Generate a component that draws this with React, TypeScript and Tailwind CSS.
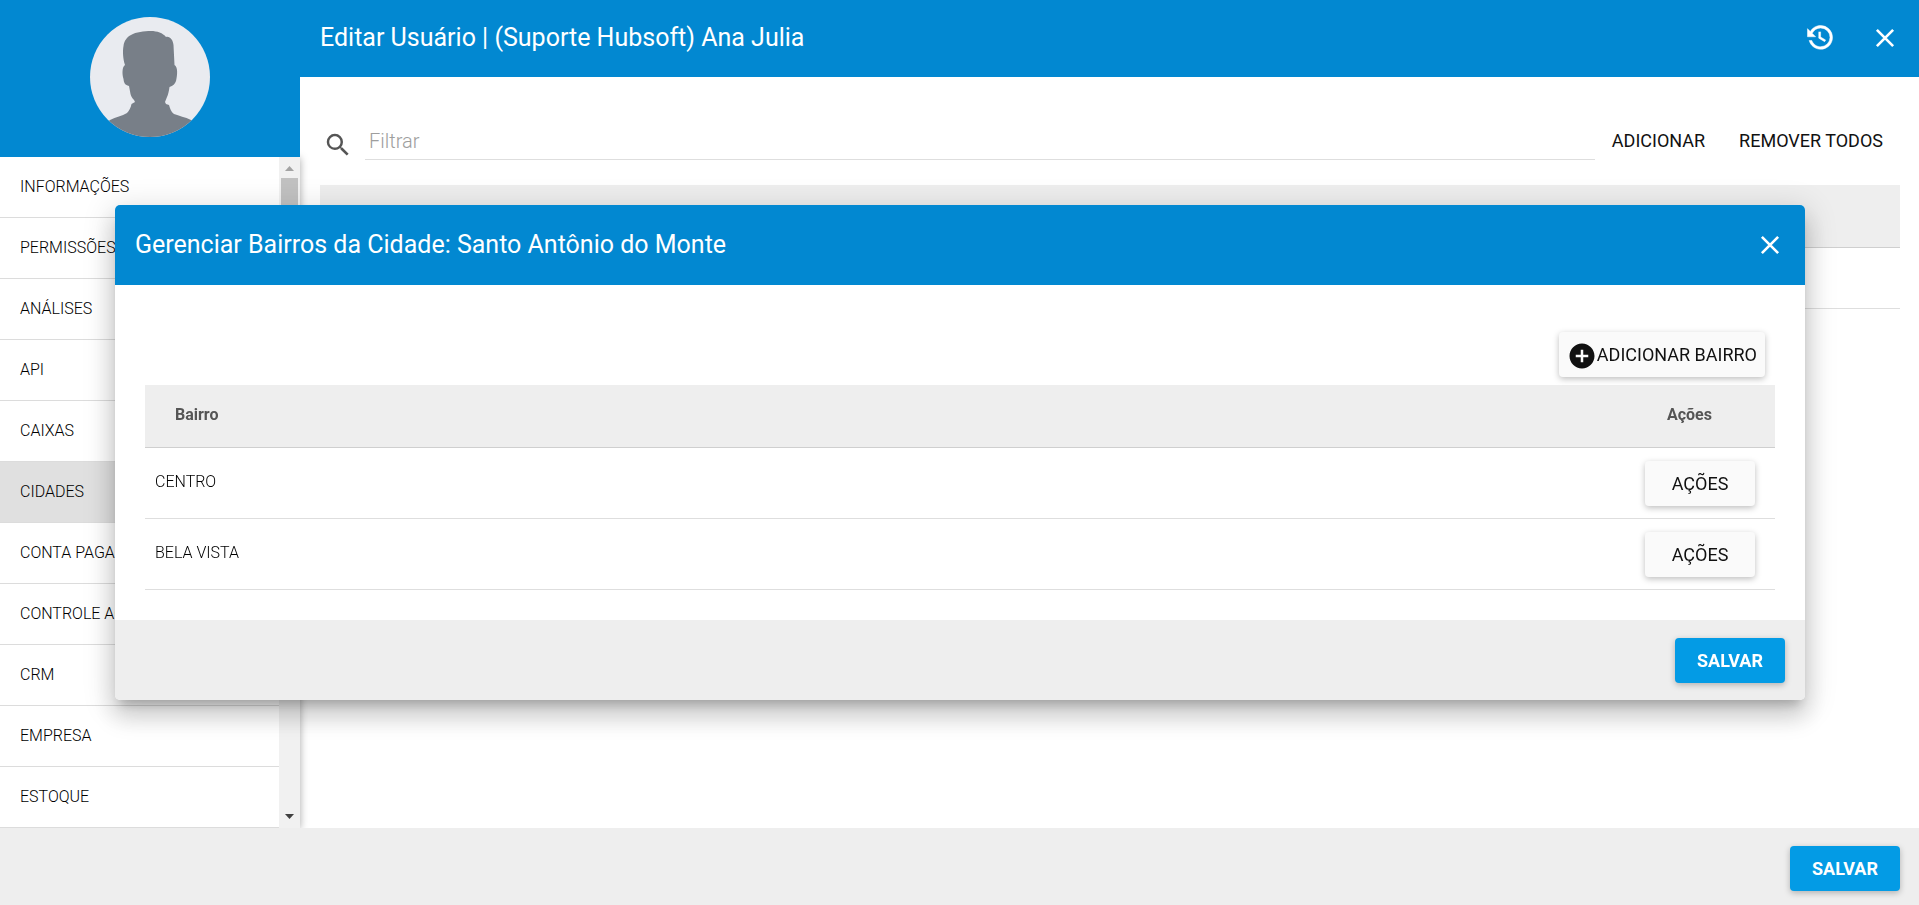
import { useState } from 'react';
import { MdAddCircle, MdSearch } from 'react-icons/md';

const sections = [
  'INFORMAÇÕES',
  'PERMISSÕES',
  'ANÁLISES',
  'API',
  'CAIXAS',
  'CIDADES',
  'CONTA PAGAR',
  'CONTROLE ACESSO',
  'CRM',
  'EMPRESA',
  'ESTOQUE',
];

const bairros = ['CENTRO', 'BELA VISTA'];

function HistoryIcon() {
  return (
    <svg viewBox="0 0 24 24" className="size-[30px]" fill="currentColor" stroke="currentColor" strokeWidth="0.4" aria-hidden="true">
      <path d="M11 7v5.11l4.71 2.79.79-1.3-4-2.35V7M12.5 2C8.97 2 5.91 3.92 4.27 6.77L2 4.5V11h6.5L5.75 8.25C6.96 5.73 9.5 4 12.5 4a7.5 7.5 0 0 1 7.5 7.5 7.5 7.5 0 0 1-7.5 7.5c-3.27 0-6.03-2.09-7.06-5h-2.1c1.1 4.03 4.77 7 9.16 7 5.24 0 9.5-4.25 9.5-9.5A9.5 9.5 0 0 0 12.5 2z" />
    </svg>
  );
}

function CloseIcon() {
  return (
    <svg viewBox="0 0 24 24" className="size-[30px]" fill="none" stroke="currentColor" strokeWidth="2.1" aria-hidden="true">
      <path d="M5.500 5.500L18.500 18.500M18.500 5.500L5.500 18.500" />
    </svg>
  );
}

function Avatar() {
  return (
    <svg viewBox="0 0 120 120" className="size-[120px] rounded-full bg-[#e9ebf0]" role="img" aria-label="Avatar">
      <path
        fill="#787f88"
        d="M61 14C67 14 73 16 76 20C80 19 83 23 83.500 28L84.500 48C88 50 87.500 58 86 64C85 67 83 69 79.500 70C79 74 78 78 77 80L75 85L76 87L79 88C80 91 81 95 84 97C89 99 95 100 101 103L120 120H0L20 103C26 100 32 99 37 96C39 94 41 90 41.500 87L45 85L44 83C42 81 41 79 40.500 77L39 69C35 68 34 66 33.500 62C32 57 32 50 35 48C33 42 32.500 34 33.500 29C34 24 37 20 41 18C46 15 54 14 61 14Z"
      />
    </svg>
  );
}

function SaveButton() {
  return (
    <button className="h-[45px] w-[110px] rounded-[4px] bg-[#039be5] text-[18px] font-bold text-white shadow-[0_2px_6px_rgba(0,0,0,0.26)]">
      SALVAR
    </button>
  );
}

export default function App() {
  const [active, setActive] = useState('CIDADES');
  const [filter, setFilter] = useState('');

  return (
    <div className="flex h-screen flex-col overflow-hidden bg-white font-['Roboto',sans-serif] text-[#111]">
      <div className="flex min-h-0 flex-1">
        {/* Sidebar */}
        <aside className="flex w-[300px] shrink-0 flex-col">
          <div className="z-10 flex h-[157px] shrink-0 justify-center bg-[#0288d1] pt-[17px]">
            <Avatar />
          </div>
          <div className="flex min-h-0 flex-1 shadow-[0_1px_8px_rgba(0,0,0,0.35)]">
            <nav className="flex-1 overflow-hidden">
              {sections.map((section) => (
                <button
                  key={section}
                  onClick={() => setActive(section)}
                  className={`block h-[61px] w-full truncate border-b border-[#dcdcdc] px-5 text-left text-[16px] font-light text-black ${
                    section === active ? 'bg-[#e0e0e0]' : 'bg-white'
                  }`}
                >
                  {section}
                </button>
              ))}
            </nav>
            {/* Scrollbar */}
            <div className="flex w-[21px] flex-col items-center bg-[#f1f1f1]">
              <svg viewBox="0 0 21 21" className="size-[21px]" aria-hidden="true">
                <path d="M6 14L10.500 9L15 14Z" fill="#a3a3a3" />
              </svg>
              <div className="h-[120px] w-[17px] bg-[#c1c1c1]" />
              <svg viewBox="0 0 21 21" className="mt-auto size-[21px]" aria-hidden="true">
                <path d="M6 7L10.500 12L15 7Z" fill="#404040" />
              </svg>
            </div>
          </div>
        </aside>

        {/* Main content */}
        <div className="flex min-w-0 flex-1 flex-col">
          <header className="flex h-[77px] shrink-0 items-center bg-[#0288d1] pr-[19px] pb-[2px] pl-5 text-white">
            <h1 className="flex-1 text-[25px]">Editar Usuário | (Suporte Hubsoft) Ana Julia</h1>
            <div className="flex items-center gap-[35px]">
              <button aria-label="Histórico">
                <HistoryIcon />
              </button>
              <button aria-label="Fechar">
                <CloseIcon />
              </button>
            </div>
          </header>

          <main className="pt-[46px] pr-[19px] pl-5">
            <div className="flex h-[37px] items-end">
              <label htmlFor="filtrar" className="pr-3 pl-[3px] text-[#555]" aria-label="Filtrar">
                <MdSearch className="size-[30px]" />
              </label>
              <input
                id="filtrar"
                value={filter}
                onChange={(e) => setFilter(e.target.value)}
                placeholder="Filtrar"
                className="h-[37px] min-w-0 flex-1 border-b border-[#dedede] px-1 text-[20px] font-light outline-none placeholder:text-[#9e9e9e]"
              />
              <div className="flex self-center pb-[2px]">
                <button className="px-[17px] text-[18px]">ADICIONAR</button>
                <button className="px-[17px] text-[18px]">REMOVER TODOS</button>
              </div>
            </div>
            <div className="mt-[25px] h-[63px] border-b border-[#cfcfcf] bg-[#eee]" />
            <div className="h-[61px] border-b border-[#dedede]" />
          </main>
        </div>
      </div>

      <footer className="flex h-[77px] shrink-0 items-start justify-end bg-[#eee] pt-[18px] pr-[19px]">
        <SaveButton />
      </footer>

      {/* Dialog */}
      <div className="fixed inset-0 z-20 flex items-center pr-[114px] pl-[115px]">
        <div
          role="dialog"
          aria-labelledby="dialog-title"
          className="w-full overflow-hidden rounded-[5px] bg-white shadow-[0_9px_10px_-5px_rgba(0,0,0,0.2),0_16px_24px_2px_rgba(0,0,0,0.14),0_6px_30px_5px_rgba(0,0,0,0.12)]"
        >
          <div className="flex h-[80px] items-center justify-between bg-[#0288d1] px-5 text-white">
            <h2 id="dialog-title" className="text-[25px]">
              Gerenciar Bairros da Cidade: Santo Antônio do Monte
            </h2>
            <button aria-label="Fechar">
              <CloseIcon />
            </button>
          </div>

          <div className="px-[30px] pt-[47px] pb-[30px]">
            <div className="flex justify-end pr-[10px] pb-2">
              <button className="flex h-[45px] items-center rounded-[4px] bg-[#fafafa] px-2 text-[18px] shadow-[0_2px_6px_rgba(0,0,0,0.26)]">
                <MdAddCircle className="mt-1 size-[30px]" />
                ADICIONAR BAIRRO
              </button>
            </div>
            <table className="w-full text-left">
              <thead>
                <tr className="h-[63px] border-b border-[#cfcfcf] bg-[#eee] text-[16px] text-[#555]">
                  <th className="px-[30px] pb-[2px] font-bold">Bairro</th>
                  <th className="w-[140px] pb-[2px] pl-8 font-bold">Ações</th>
                </tr>
              </thead>
              <tbody>
                {bairros.map((bairro) => (
                  <tr key={bairro} className="h-[71px] border-b border-[#dedede]">
                    <td className="px-[10px] pb-[2px] text-[16px] font-light text-black">{bairro}</td>
                    <td className="pl-[10px]">
                      <button className="h-[45px] w-[110px] rounded-[4px] bg-[#fafafa] text-[18px] shadow-[0_2px_6px_rgba(0,0,0,0.26)]">
                        AÇÕES
                      </button>
                    </td>
                  </tr>
                ))}
              </tbody>
            </table>
          </div>

          <div className="flex h-[80px] items-center justify-end bg-[#eee] px-5">
            <SaveButton />
          </div>
        </div>
      </div>
    </div>
  );
}
